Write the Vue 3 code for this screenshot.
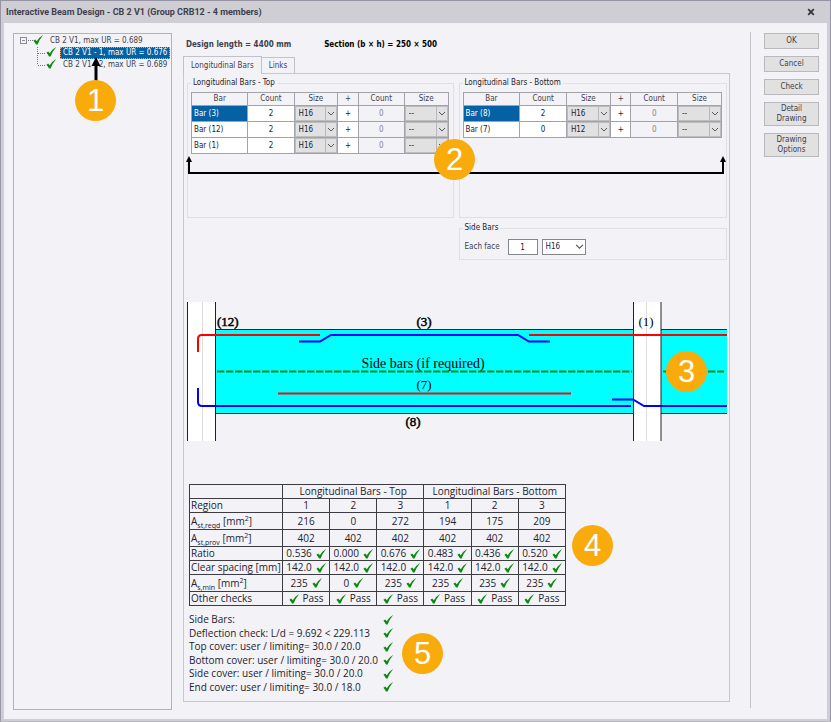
<script setup>
import { ref } from 'vue'

const tick = 'M0.4 5.8 L2.2 4.6 L3.8 6.2 Q6 2.4 9.6 0.2 L9.8 0.6 Q6.8 4.2 4.6 9.4 L3 9.4 Q2 7.4 0.4 5.8 Z'

const groups = ref([
  {
    title: 'Longitudinal Bars - Top',
    rows: [
      { bar: 'Bar (3)', count: 2, size: 'H16', selected: true },
      { bar: 'Bar (12)', count: 2, size: 'H16' },
      { bar: 'Bar (1)', count: 2, size: 'H16' },
    ],
  },
  {
    title: 'Longitudinal Bars - Bottom',
    rows: [
      { bar: 'Bar (8)', count: 2, size: 'H16', selected: true },
      { bar: 'Bar (7)', count: 0, size: 'H12' },
    ],
  },
])

const sizes = ['H12', 'H16', 'H20']
const sideCount = ref('1')
const sideSize = ref('H16')

const results = [
  { label: 'Region', values: ['1', '2', '3', '1', '2', '3'] },
  { label: 'A', sub: 'st,reqd', values: ['216', '0', '272', '194', '175', '209'] },
  { label: 'A', sub: 'st,prov', values: ['402', '402', '402', '402', '402', '402'] },
  { label: 'Ratio', values: ['0.536', '0.000', '0.676', '0.483', '0.436', '0.520'], mark: 'after' },
  { label: 'Clear spacing [mm]', values: Array(6).fill('142.0'), mark: 'after' },
  { label: 'A', sub: 's,min', values: ['235', '0', '235', '235', '235', '235'], mark: 'after' },
  { label: 'Other checks', values: Array(6).fill('Pass'), mark: 'before' },
]

const checks = [
  'Side Bars:',
  'Deflection check: L/d = 9.692 < 229.113',
  'Top cover: user / limiting= 30.0 / 20.0',
  'Bottom cover: user / limiting= 30.0 / 20.0',
  'Side cover: user / limiting= 30.0 / 20.0',
  'End cover: user / limiting= 30.0 / 18.0',
]

const actions = ['OK', 'Cancel', 'Check', 'Detail Drawing', 'Drawing Options']
</script>

<template>
  <div class="window">
    <header class="titlebar">
      <h1>Interactive Beam Design - CB 2 V1 (Group CRB12 - 4 members)</h1>
      <button class="close" aria-label="Close">
        <svg viewBox="0 0 8 8"><path d="M1.2 1.2 L6.8 6.8 M6.8 1.2 L1.2 6.8" /></svg>
      </button>
    </header>

    <div class="content">
      <nav class="tree">
        <ul>
          <li class="node root">
            <svg class="lines" viewBox="0 0 13 12">
              <rect x="0.5" y="2.5" width="6" height="6" class="box" />
              <path d="M2 5.5 H5" class="minus" />
              <path d="M8 5.5 H13" class="dots" />
            </svg>
            <svg class="tick" viewBox="0 0 10 10"><path :d="tick" /></svg>
            <a href="#">CB 2 V1, max UR = 0.689</a>
          </li>
          <li class="node child">
            <svg class="lines" viewBox="0 0 9 12"><path d="M0.5 0 V12 M1 6.5 H9" class="dots" /></svg>
            <svg class="tick" viewBox="0 0 10 10"><path :d="tick" /></svg>
            <a href="#" class="selected">CB 2 V1 - 1, max UR = 0.676</a>
          </li>
          <li class="node child">
            <svg class="lines" viewBox="0 0 9 12"><path d="M0.5 0 V6 M1 6.5 H9" class="dots" /></svg>
            <svg class="tick" viewBox="0 0 10 10"><path :d="tick" /></svg>
            <a href="#">CB 2 V1 - 2, max UR = 0.689</a>
          </li>
        </ul>
        <svg class="pointer" viewBox="0 0 10 26"><path d="M5 8 V26" /><path d="M5 0 L9.5 9 H0.5 Z" class="head" /></svg>
        <span class="callout c1">1</span>
      </nav>

      <main class="main">
        <p class="summary">
          <strong class="length">Design length = 4400 mm</strong>
          <strong>Section (b × h) = 250 × 500</strong>
        </p>
        <div class="tabs" role="tablist">
          <button class="tab active" role="tab" aria-selected="true">Longitudinal Bars</button>
          <button class="tab" role="tab" aria-selected="false">Links</button>
        </div>

        <div class="pane">
          <div class="groups">
            <fieldset v-for="group in groups" :key="group.title" class="group bars">
              <legend>{{ group.title }}</legend>
              <table class="grid">
                <colgroup>
                  <col class="w-bar" /><col class="w-num" /><col class="w-size" /><col class="w-plus" /><col class="w-num" /><col class="w-size" />
                </colgroup>
                <thead>
                  <tr><th>Bar</th><th>Count</th><th>Size</th><th>+</th><th>Count</th><th>Size</th></tr>
                </thead>
                <tbody>
                  <tr v-for="row in group.rows" :key="row.bar">
                    <td class="bar" :class="{ selected: row.selected }">{{ row.bar }}</td>
                    <td>{{ row.count }}</td>
                    <td class="pick">
                      <span class="drop">
                        <select v-model="row.size" :aria-label="row.bar + ' size'"><option v-for="s in sizes" :key="s">{{ s }}</option></select>
                        <svg viewBox="0 0 8 8"><path d="M1 2.5 L4 5.5 L7 2.5" /></svg>
                      </span>
                    </td>
                    <td>+</td>
                    <td class="off">0</td>
                    <td class="pick">
                      <span class="drop">
                        <select :aria-label="row.bar + ' extra size'"><option>--</option></select>
                        <svg viewBox="0 0 8 8"><path d="M1 2.5 L4 5.5 L7 2.5" /></svg>
                      </span>
                    </td>
                  </tr>
                </tbody>
              </table>
            </fieldset>
            <fieldset class="group side">
              <legend>Side Bars</legend>
              <div class="face">
                <label for="face-count">Each face</label>
                <input id="face-count" v-model="sideCount" type="text" />
                <span class="drop light">
                  <select v-model="sideSize" aria-label="Side bar size"><option v-for="s in sizes" :key="s">{{ s }}</option></select>
                  <svg viewBox="0 0 8 8"><path d="M1 2.5 L4 5.5 L7 2.5" /></svg>
                </span>
              </div>
            </fieldset>
            <div class="bracket">
              <svg class="tip left" viewBox="0 0 6 6"><path d="M3 0 L6 6 H0 Z" /></svg>
              <svg class="tip right" viewBox="0 0 6 6"><path d="M3 0 L6 6 H0 Z" /></svg>
              <span class="callout c2">2</span>
            </div>
          </div>

          <div class="diagram">
            <svg viewBox="0 0 540 140">
              <rect x="28" y="27" width="512" height="85" fill="#00ffff" />
              <path d="M28 27.5 H540 M28 111.5 H540" class="edge" />
              <rect x="0" y="0" width="29" height="139" fill="#ffffff" />
              <rect x="446" y="0" width="28" height="139" fill="#ffffff" />
              <path d="M15.5 0 V139 M459.5 0 V139" class="axis" />
              <path d="M0.5 0 V139 M28.5 0 V139 M446.5 0 V139 M474 0 V139" class="edge" />
              <path d="M30 69.5 H445 M476 69.5 H537" class="dash" />
              <path d="M11 50 V37 Q11 33 15 33 H133 M342 33 H540" class="red" />
              <path d="M91 91.5 H384" class="red low" />
              <path d="M112 39.5 H133 L144 33 H331 L342 39.5 H363" class="blue" />
              <path d="M11 86 V100 Q11 104 15 104 H444 M425 97.5 H446 L457 104 H540" class="blue" />
              <text x="30" y="24" class="strong">(12)</text>
              <text x="237" y="24" class="strong mid">(3)</text>
              <text x="459" y="24" class="mid">(1)</text>
              <text x="236" y="66" class="mid caption">Side bars (if required)</text>
              <text x="237" y="87" class="mid">(7)</text>
              <text x="226" y="124" class="strong mid">(8)</text>
            </svg>
            <span class="callout c3">3</span>
          </div>

          <div class="outcome">
            <table class="results">
              <colgroup><col class="w-label" /><col v-for="n in 6" :key="n" class="w-val" /></colgroup>
              <thead>
                <tr><th></th><th colspan="3">Longitudinal Bars - Top</th><th colspan="3">Longitudinal Bars - Bottom</th></tr>
              </thead>
              <tbody>
                <tr v-for="(row, i) in results" :key="i" :class="{ tall: row.sub }">
                  <th scope="row">{{ row.label }}<template v-if="row.sub"><sub>{{ row.sub }}</sub> [mm<sup>2</sup>]</template></th>
                  <td v-for="(value, j) in row.values" :key="j">
                    <span class="cell">
                      <svg v-if="row.mark === 'before'" class="tick" viewBox="0 0 10 10"><path :d="tick" /></svg>
                      {{ value }}
                      <svg v-if="row.mark === 'after'" class="tick" viewBox="0 0 10 10"><path :d="tick" /></svg>
                    </span>
                  </td>
                </tr>
              </tbody>
            </table>
            <span class="callout">4</span>
          </div>

          <div class="outcome checks">
            <ul>
              <li v-for="line in checks" :key="line">
                <span>{{ line }}</span>
                <svg class="tick" viewBox="0 0 10 10"><path :d="tick" /></svg>
              </li>
            </ul>
            <span class="callout">5</span>
          </div>
        </div>
      </main>

      <aside class="actions">
        <button v-for="label in actions" :key="label">{{ label }}</button>
      </aside>
    </div>
  </div>
</template>

<style>
body {
  margin: 0;
  background: #f3f2f7;
}
</style>

<style scoped>
* {
  box-sizing: border-box;
}
.window {
  display: flex;
  flex-direction: column;
  min-height: 100vh;
  border: 1px solid #9795a3;
  border-bottom-color: #b9b8c1;
  background: #f3f2f7;
  color: #3f3f4c;
  font: 8px/12px "DejaVu Sans Condensed", "DejaVu Sans", sans-serif;
}
button, input, select {
  font: inherit;
  color: inherit;
  margin: 0;
}
ul {
  list-style: none;
  margin: 0;
  padding: 0;
}
a {
  color: inherit;
  text-decoration: none;
}
.titlebar {
  display: flex;
  align-items: center;
  justify-content: space-between;
  height: 22px;
  padding: 0 15px 0 5px;
  background: #cfced5;
}
.titlebar h1 {
  margin: 0;
  font: bold 9px/12px Roboto, sans-serif;
}
.close {
  display: flex;
  padding: 0;
  border: 0;
  background: none;
}
.close svg {
  width: 8px;
  height: 8px;
  stroke: #33333d;
  stroke-width: 1.8;
}
.content {
  display: flex;
  flex: 1;
  padding: 10px 8px 9px 9px;
  border: solid #cfced5;
  border-width: 0 3px 2px;
}
.tick {
  flex: none;
  width: 10px;
  height: 10px;
  fill: #0c8a12;
}

.tree {
  position: relative;
  flex: none;
  width: 159px;
  padding: 1px;
  border: 1px solid #b3b2bb;
}
.node {
  display: flex;
  align-items: center;
  height: 12px;
  padding-left: 5px;
}
.node.child {
  padding-left: 22px;
}
.node .tick {
  margin-bottom: 2px;
}
.node a {
  flex: 1;
  margin-left: 4px;
  padding-left: 3px;
  overflow: hidden;
  white-space: nowrap;
}
.node .selected {
  background: #0560a4;
  color: #ffffff;
  outline: 1px dotted #d9a06b;
  outline-offset: -1px;
}
.lines {
  flex: none;
  width: 13px;
  height: 12px;
  fill: none;
}
.child .lines {
  width: 9px;
}
.box, .minus {
  stroke: #8c8c98;
}
.dots {
  stroke: #77777f;
  stroke-dasharray: 1 1;
}
.callout {
  display: flex;
  flex: none;
  align-items: center;
  justify-content: center;
  width: 41px;
  height: 41px;
  border-radius: 50%;
  background: #f9ab0c;
  color: #ffffff;
  font: 31px/41px "Liberation Sans", sans-serif;
}
.pointer {
  position: absolute;
  left: 77px;
  top: 23px;
  width: 10px;
  height: 26px;
  stroke: #000000;
  stroke-width: 3;
}
.pointer .head {
  stroke: none;
}
.c1 {
  position: absolute;
  left: 61px;
  top: 46px;
}

.main {
  display: flex;
  flex: 1;
  flex-direction: column;
  margin: 6px 20px 8px 11px;
}
.summary {
  display: flex;
  gap: 33px;
  margin: 0 0 5px 3px;
  color: #000000;
}
.summary .length {
  color: #3f3f4c;
}
.tabs {
  display: flex;
  align-items: flex-end;
}
.tab {
  height: 16px;
  padding: 0 7px;
  border: 1px solid #c3c2ca;
  border-bottom: 0;
  border-left: 0;
  background: #f3f2f7;
}
.tab.active {
  position: relative;
  z-index: 1;
  height: 18px;
  margin-bottom: -1px;
  border-left: 1px solid #c3c2ca;
}
.pane {
  flex: 1;
  padding: 3px 2px 4px 3px;
  border: 1px solid #c9c8cf;
}
.groups {
  position: relative;
  display: grid;
  grid-template-columns: 267fr 269fr;
  column-gap: 5px;
  row-gap: 4px;
}
.group {
  min-width: 0;
  margin: 0;
  padding: 3px 4px 3px 3px;
  border: 1px solid #e0dfe4;
}
.group legend {
  padding: 0 2px;
  color: #23232c;
}
.bars {
  min-height: 141px;
}
.side {
  grid-column: 2;
  padding-top: 5px;
  padding-bottom: 4px;
}
.grid {
  width: 100%;
  border-collapse: collapse;
  table-layout: fixed;
  color: #23232c;
}
.w-bar { width: 22%; }
.w-num { width: 18%; }
.w-size { width: 17%; }
.w-plus { width: 8%; }
.grid th {
  height: 13px;
  padding: 0;
  border: solid #a3a2a9;
  border-width: 1px;
  color: #3f3f4c;
  font-weight: normal;
  line-height: 12px;
}
.grid td {
  height: 16px;
  padding: 0;
  border: 1px solid #a3a2a9;
  background: #ffffff;
  text-align: center;
}
.grid .bar {
  padding-left: 2px;
  text-align: left;
}
.grid .bar.selected {
  background: #0560a4;
  color: #ffffff;
}
.grid .off {
  background: #f3f2f7;
  color: #85858f;
}
.drop {
  position: relative;
  display: block;
}
.drop select {
  display: block;
  width: 100%;
  height: 15px;
  padding: 0 0 0 3px;
  border: 1px solid #bdbdc0;
  border-radius: 0;
  background: #e1e1e1;
  appearance: none;
}
.drop svg {
  position: absolute;
  top: 1px;
  right: 1px;
  width: 11px;
  height: 13px;
  padding: 0 1px;
  border-left: 1px solid #b9b9bc;
  fill: none;
  stroke: #55555e;
  pointer-events: none;
}
.face {
  display: flex;
  align-items: center;
  gap: 4px;
}
.face label {
  margin: 0 4px 0 2px;
}
.face input {
  width: 30px;
  height: 16px;
  padding: 0;
  border: 1px solid #85858c;
  background: #ffffff;
  color: #23232c;
  text-align: center;
}
.light {
  width: 44px;
}
.light select {
  height: 16px;
  border-color: #85858c;
  background: #ffffff;
  color: #23232c;
}
.light svg {
  border: 0;
}
.bracket {
  position: absolute;
  top: 84px;
  right: 3px;
  left: 1px;
  height: 13px;
  border: solid #000000;
  border-width: 0 2px 2px;
}
.tip {
  position: absolute;
  top: -5px;
  width: 6px;
  height: 6px;
}
.tip.left {
  left: -4px;
}
.tip.right {
  right: -4px;
}
.c2 {
  position: absolute;
  top: -22px;
  left: calc(50% - 22px);
}

.diagram {
  position: relative;
  margin-top: 42px;
}
.diagram svg {
  display: block;
  width: 100%;
}
.diagram path {
  fill: none;
  stroke-width: 2;
}
.diagram .edge {
  stroke: #222222;
  stroke-width: 1;
}
.diagram .axis {
  stroke: #dddddd;
  stroke-width: 1;
}
.diagram .dash {
  stroke: #0a8a1a;
  stroke-dasharray: 7.4 1.6;
}
.diagram .red {
  stroke: #ff0000;
}
.diagram .low {
  stroke: #e01818;
}
.diagram .blue {
  stroke: #0000ff;
}
.diagram text {
  fill: #000000;
  font: 13px "Liberation Serif", serif;
}
.diagram .caption {
  font-size: 14px;
}
.diagram .mid {
  text-anchor: middle;
}
.diagram .strong {
  stroke: #000000;
  stroke-width: 0.5;
}
.c3 {
  position: absolute;
  top: 49px;
  right: 20px;
}

.outcome {
  display: flex;
  align-items: center;
  gap: 6px;
  margin: 42px 0 0 2px;
  color: #23232c;
  font: 10px/13px "Open Sans", "Noto Sans", sans-serif;
}
.results {
  border-collapse: collapse;
  table-layout: fixed;
  width: 377px;
}
.w-label { width: 93px; }
.results th, .results td {
  height: 14px;
  padding: 0 1px;
  border: 1px solid #3c3c42;
  font-weight: normal;
  line-height: 13px;
  text-align: center;
  white-space: nowrap;
}
.results th[scope] {
  text-align: left;
}
.results .tall th, .results .tall td {
  height: 17px;
}
.results sub, .results sup {
  font-size: 7px;
  line-height: 0;
}
.cell {
  display: flex;
  align-items: center;
  justify-content: center;
  gap: 4px;
}
.checks {
  gap: 9px;
  margin-top: 7px;
}
.checks ul {
  display: flex;
  flex-direction: column;
  justify-content: space-between;
  width: 204px;
  min-height: 81px;
}
.checks li {
  display: flex;
  align-items: center;
  justify-content: space-between;
  white-space: nowrap;
}

.actions {
  display: flex;
  flex: none;
  flex-direction: column;
  gap: 7px;
  width: 69px;
  margin: -1px 0 2px;
  padding-top: 1px;
  padding-left: 13px;
  border-left: 1px solid #c4c4c6;
}
.actions button {
  min-height: 16px;
  padding: 1px 6px;
  border: 1px solid #b9b9bc;
  background: #e1e1e1;
  line-height: 10px;
}
</style>
